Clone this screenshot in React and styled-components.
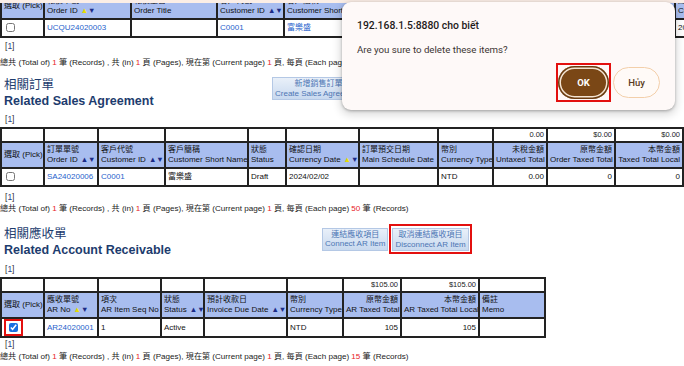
import React from 'react';
import styled, { createGlobalStyle } from 'styled-components';

const GlobalStyle = createGlobalStyle`
  html, body { margin: 0; padding: 0; overflow: hidden; background: #fff; }
  body { font-family: "Liberation Sans", "Noto Sans CJK TC", sans-serif; color: #111; }
`;

const Page = styled.div`
  position: relative;
  width: 684px;
  height: 366px;
  overflow: hidden;
`;

const Grid = styled.table`
  border-collapse: collapse;
  table-layout: fixed;
  width: ${p => p.$w}px;
  margin-top: ${p => p.$top}px;
  font-size: 8px;
  line-height: 10px;
`;

const Col = styled.col`
  width: ${p => p.$w}px;
`;

const Row = styled.tr`
  height: ${p => p.$h}px;
`;

const BaseCell = styled.td`
  border: 2px solid #222;
  padding: 0 2px;
  vertical-align: middle;
  white-space: nowrap;
  overflow: hidden;
  text-align: ${p => (p.$right ? 'right' : 'left')};
`;

const HeadCell = styled(BaseCell)`
  background: #a8bdef;
  color: #111;
  font-weight: normal;
`;

const BodyCell = styled(BaseCell)`
  background: #fff;
  color: #111;
`;

const TotalCell = styled(BaseCell)`
  background: #fff;
  font-size: 7.5px;
  color: #222;
`;

const Line = styled.span`
  display: block;
`;

const Arrow = styled.span`
  font-size: 7.5px;
  color: ${p => p.$c};
  margin-left: ${p => p.$gap}px;
`;

const Link = styled.a`
  color: #1f5fcc;
  text-decoration: none;
`;

const Check = styled.input`
  width: 9px;
  height: 9px;
  margin: 0 0 0 2px;
  vertical-align: middle;
  accent-color: #1a6fe0;
`;

const CheckMark = styled.span`
  display: inline-flex;
  align-items: center;
  box-sizing: border-box;
  width: 19px;
  height: 17px;
  border: 2px solid #e3100f;
  padding-left: 1px;
  vertical-align: middle;
`;

const Pager = styled.div`
  margin-top: ${p => p.$top}px;
  padding-left: 5px;
  font-size: 8.5px;
  line-height: 10px;
  color: #333;
`;

const PageLink = styled.span`
  color: #27468a;
`;

const Summary = styled.div`
  margin-top: ${p => p.$top}px;
  font-size: 8.1px;
  line-height: 10px;
  color: #222;
  white-space: nowrap;
`;

const Red = styled.span`
  color: #e8231f;
`;

const SectionHead = styled.div`
  display: flex;
  align-items: flex-start;
  margin-top: ${p => p.$top}px;
  padding-left: 4px;
`;

const Titles = styled.div`
  width: ${p => p.$w}px;
  flex: none;
  color: #1d3c6e;
  font-size: 12.5px;
  line-height: 16px;
`;

const EnTitle = styled.div`
  font-weight: bold;
`;

const Actions = styled.div`
  display: flex;
  align-items: center;
  gap: 1px;
  margin-top: ${p => p.$top}px;
`;

const ActionButton = styled.button`
  font-family: "Liberation Sans", "Noto Sans CJK TC", sans-serif;
  font-size: 8px;
  line-height: 9.5px;
  padding: 1px 2px;
  margin: 0;
  color: #4d76b4;
  background: linear-gradient(#e9f0f9, #c8d9ef);
  border: 1px solid #b4c8e5;
  border-radius: 0;
  white-space: nowrap;
  text-align: center;
`;

const RedFrame = styled.span`
  display: inline-flex;
  border: 2px solid #e3100f;
  padding: ${p => p.$pad};
`;

const TopStrip = styled.div`
  position: absolute;
  left: 0;
  top: 0;
  width: 100%;
  height: 3px;
  background: #fbeee6;
`;

const Dialog = styled.div`
  position: absolute;
  left: 342px;
  top: 2px;
  width: 333px;
  height: 108px;
  box-sizing: border-box;
  padding: 15px 15px 0 15px;
  background: #fef9f8;
  border-radius: 9px;
  box-shadow: 0 1px 3px rgba(0, 0, 0, 0.28), 0 3px 8px 2px rgba(0, 0, 0, 0.14);
  font-family: Roboto, "Noto Sans", sans-serif;
  display: flex;
  flex-direction: column;
`;

const DialogTitle = styled.div`
  font-size: 10.4px;
  line-height: 18px;
  font-weight: 500;
  color: #1f1b1a;
`;

const DialogMessage = styled.div`
  margin-top: 8px;
  font-size: 9.7px;
  line-height: 14px;
  color: #3c3533;
`;

const DialogButtons = styled.div`
  margin-top: 6px;
  display: flex;
  justify-content: flex-end;
  align-items: center;
  gap: 2px;
`;

const OkButton = styled.button`
  width: 51px;
  height: 33px;
  border: none;
  border-radius: 17px;
  background: #7a4716;
  box-shadow: inset 0 0 0 1.5px #6a3b0f, inset 0 0 0 3px #f4e4d2;
  color: #fff;
  font-family: Roboto, "Noto Sans", sans-serif;
  font-size: 9.5px;
  font-weight: bold;
  padding: 0;
`;

const CancelButton = styled.button`
  width: 47px;
  height: 31px;
  border: 1px solid #f3cfaa;
  border-radius: 16px;
  background: #fffaf7;
  color: #5a3a22;
  font-family: Roboto, "Noto Sans", sans-serif;
  font-size: 9.5px;
  font-weight: 500;
  padding: 0;
`;

const NAVY = '#1b2b86';
const YELLOW = '#e6dc00';

function Sort({ kind }) {
  return (
    <>
      <Arrow $c={kind === 'up' ? YELLOW : NAVY} $gap={3}>▲</Arrow>
      <Arrow $c={NAVY} $gap={0}>▼</Arrow>
    </>
  );
}

function Head({ h }) {
  if (!h.zh) return <HeadCell as="th" $right={h.right}>{h.en}</HeadCell>;
  return (
    <HeadCell as="th" $right={h.right}>
      <Line>{h.zh}</Line>
      <Line>
        {h.en}
        {h.sort && <Sort kind={h.sort} />}
      </Line>
    </HeadCell>
  );
}

function DataTable({ cols, top, totals, heads, rows, bodyH = 18 }) {
  const width = cols.reduce((a, b) => a + b, 0);
  return (
    <Grid $w={width} $top={top}>
      <colgroup>
        {cols.map((w, i) => (
          <Col key={i} $w={w} />
        ))}
      </colgroup>
      <tbody>
        {totals && (
          <Row $h={14}>
            {totals.map((t, i) => (
              <TotalCell key={i} $right>{t}</TotalCell>
            ))}
          </Row>
        )}
        <Row $h={26}>
          {heads.map((h, i) => (
            <Head key={i} h={h} />
          ))}
        </Row>
        {rows.map((r, ri) => (
          <Row key={ri} $h={bodyH}>
            {r.map((c, i) => (
              <BodyCell key={i} $right={heads[i].right}>{c}</BodyCell>
            ))}
          </Row>
        ))}
      </tbody>
    </Grid>
  );
}

function Total({ top, each }) {
  return (
    <Summary $top={top}>
      總共 (Total of) <Red>1</Red> 筆 (Records) , 共 (in) <Red>1</Red> 頁 (Pages), 現在第 (Current page){' '}
      <Red>1</Red> 頁, 每頁 (Each page) <Red>{each}</Red> 筆 (Records)
    </Summary>
  );
}

function Pages({ top }) {
  return (
    <Pager $top={top}>
      [<PageLink>1</PageLink>]
    </Pager>
  );
}

const pick = { en: '選取 (Pick)' };

const quoteHeads = [
  pick,
  { zh: '報價單號', en: 'Order ID', sort: 'up' },
  { zh: '報價主旨', en: 'Order Title' },
  { zh: '客戶代號', en: 'Customer ID', sort: 'both' },
  { zh: '客戶簡稱', en: 'Customer Short Name' },
  { zh: '報價日期', en: 'Quote Date' },
  { zh: '狀態', en: 'Status' },
  { zh: '業務', en: 'Sales' },
  { zh: '建立日期', en: 'Create Date' },
];

const salesHeads = [
  pick,
  { zh: '訂單單號', en: 'Order ID', sort: 'both' },
  { zh: '客戶代號', en: 'Customer ID', sort: 'both' },
  { zh: '客戶簡稱', en: 'Customer Short Name' },
  { zh: '狀態', en: 'Status' },
  { zh: '確認日期', en: 'Currency Date', sort: 'up' },
  { zh: '訂單預交日期', en: 'Main Schedule Date' },
  { zh: '幣別', en: 'Currency Type' },
  { zh: '未稅金額', en: 'Untaxed Total', right: true },
  { zh: '原幣金額', en: 'Order Taxed Total', right: true },
  { zh: '本幣金額', en: 'Taxed Total Local', right: true },
  { zh: '本幣未稅', en: 'Untaxed Local', right: true },
];

const arHeads = [
  pick,
  { zh: '應收單號', en: 'AR No', sort: 'up' },
  { zh: '項次', en: 'AR Item Seq No' },
  { zh: '狀態', en: 'Status', sort: 'both' },
  { zh: '預計收款日', en: 'Invoice Due Date', sort: 'both' },
  { zh: '幣別', en: 'Currency Type' },
  { zh: '原幣金額', en: 'AR Taxed Total', right: true },
  { zh: '本幣金額', en: 'AR Taxed Total Local', right: true },
  { zh: '備註', en: 'Memo' },
];

export default function App() {
  return (
    <Page>
      <GlobalStyle />

      <DataTable
        cols={[43, 87, 86, 67, 120, 100, 80, 91, 80]}
        top={-8}
        heads={quoteHeads}
        rows={[
          [
            <Check type="checkbox" readOnly />,
            <Link>UCQU24020003</Link>,
            '',
            <Link>C0001</Link>,
            <Link>富樂盛</Link>,
            '2024/02/02',
            'Draft',
            '',
            '2024/02/02',
          ],
        ]}
      />
      <Pages top={3} />
      <Total top={7} each={50} />

      <SectionHead $top={9}>
        <Titles $w={268}>
          <div>相關訂單</div>
          <EnTitle>Related Sales Agreement</EnTitle>
        </Titles>
        <Actions $top={0}>
          <ActionButton>
            新增銷售訂單
            <br />
            Create Sales Agreement
          </ActionButton>
        </Actions>
      </SectionHead>
      <Pages top={5} />
      <DataTable
        cols={[43, 54, 67, 83, 38, 73, 79, 55, 54, 68, 68, 60]}
        top={3}
        totals={['', '', '', '', '', '', '', '', '0.00', '$0.00', '$0.00', '']}
        heads={salesHeads}
        rows={[
          [
            <Check type="checkbox" readOnly />,
            <Link>SA24020006</Link>,
            <Link>C0001</Link>,
            '富樂盛',
            'Draft',
            '2024/02/02',
            '',
            'NTD',
            '0.00',
            '0',
            '0',
            '',
          ],
        ]}
      />
      <Pages top={5} />
      <Total top={2} each={50} />

      <SectionHead $top={12}>
        <Titles $w={318}>
          <div>相關應收單</div>
          <EnTitle>Related Account Receivable</EnTitle>
        </Titles>
        <Actions $top={-2}>
          <ActionButton>
            連結應收項目
            <br />
            Connect AR Item
          </ActionButton>
          <RedFrame $pad="2px 1px 1px 1px">
            <ActionButton>
              取消連結應收項目
              <br />
              Disconnect AR Item
            </ActionButton>
          </RedFrame>
        </Actions>
      </SectionHead>
      <Pages top={6} />
      <DataTable
        cols={[43, 54, 63, 43, 83, 56, 58, 78, 66]}
        top={3}
        bodyH={19}
        totals={['', '', '', '', '', '', '$105.00', '$105.00', '']}
        heads={arHeads}
        rows={[
          [
            <CheckMark>
              <Check type="checkbox" checked readOnly />
            </CheckMark>,
            <Link>AR24020001</Link>,
            '1',
            'Active',
            '',
            'NTD',
            '105',
            '105',
            '',
          ],
        ]}
      />
      <Pages top={1} />
      <Total top={3} each={15} />

      <TopStrip />
      <Dialog>
        <DialogTitle>192.168.1.5:8880 cho biết</DialogTitle>
        <DialogMessage>Are you sure to delete these items?</DialogMessage>
        <DialogButtons>
          <RedFrame $pad="1px 0">
            <OkButton>OK</OkButton>
          </RedFrame>
          <CancelButton>Hủy</CancelButton>
        </DialogButtons>
      </Dialog>
    </Page>
  );
}
